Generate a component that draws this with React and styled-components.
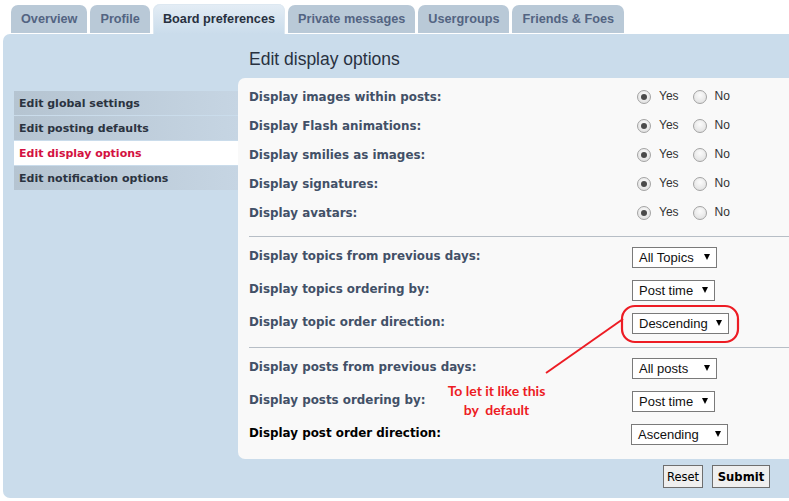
import React from 'react';
import styled, { createGlobalStyle } from 'styled-components';

const GlobalStyle = createGlobalStyle`
  html, body { margin: 0; padding: 0; background: #ffffff; }
  body { font-family: "DejaVu Sans", Verdana, sans-serif; overflow: hidden; }
  * { box-sizing: border-box; }
`;

const Page = styled.div`
  position: relative;
  width: 789px;
  height: 501px;
  padding-top: 4px;
`;

const Tabs = styled.ul`
  display: flex;
  align-items: flex-end;
  gap: 3px;
  height: 30px;
  margin: 0 0 0 11px;
  padding: 0;
  list-style: none;
`;

const Tab = styled.li`
  display: flex;
  align-items: center;
  height: ${p => (p.$active ? '30px' : '28px')};
  margin-bottom: ${p => (p.$active ? '0' : '1px')};
  padding: 0 10px;
  border-radius: 7px 7px 0 0;
  font-family: "Liberation Sans", Arial, sans-serif;
  font-weight: bold;
  font-size: 12.7px;
  color: ${p => (p.$active ? '#28313F' : '#536482')};
  background: ${p => (p.$active ? 'linear-gradient(#E4EDF5, #CADCEB)' : '#B9C9D7')};
  box-shadow: ${p => (p.$active ? 'inset 1px 1px 0 #DDE8F1, inset -1px 0 0 #DDE8F1' : 'none')};
`;

const Panel = styled.div`
  display: grid;
  grid-template-columns: 235px 1fr;
  height: 464px;
  margin-left: 3px;
  background: #CADCEB;
  border-radius: 7px 0 0 7px;
`;

const Sidebar = styled.ul`
  margin: 0;
  padding: 57px 0 0 11px;
  list-style: none;
`;

const MenuItem = styled.li`
  display: flex;
  align-items: center;
  height: 24px;
  margin-bottom: 1px;
  padding-left: 5px;
  font-weight: bold;
  font-size: 11px;
  color: ${p => (p.$active ? '#D31141' : '#2B3340')};
  background: ${p => (p.$active ? '#FFFFFF' : 'linear-gradient(to right, #B5C4D1, #C6D5E3)')};
`;

const Main = styled.div`
  display: flex;
  flex-direction: column;
`;

const Heading = styled.h2`
  margin: 15px 0 9px 11px;
  font-family: "Liberation Sans", Arial, sans-serif;
  font-weight: normal;
  font-size: 17.5px;
  line-height: 20px;
  color: #28313F;
`;

const Content = styled.div`
  height: 381px;
  padding-left: 11px;
  background: #F9F9F9;
  border-radius: 7px 0 0 7px;
`;

const Fieldset = styled.div`
  padding: ${p => p.$pad};
  border-top: ${p => (p.$line ? '1px solid #B7BEC6' : 'none')};
`;

const Row = styled.div`
  display: grid;
  grid-template-columns: 383px 1fr;
  align-items: center;
  height: ${p => p.$h}px;
`;

const Label = styled.span`
  font-weight: bold;
  font-size: 11.9px;
  color: ${p => (p.$dark ? '#000000' : '#425067')};
`;

const RadioGroup = styled.div`
  display: flex;
  align-items: center;
  font-family: "Liberation Sans", Arial, sans-serif;
  font-size: 12px;
  color: #333333;
`;

const Radio = styled.span`
  position: relative;
  width: 14px;
  height: 14px;
  margin: 1px 8px 0 ${p => (p.$first ? '5px' : '14px')};
  border: 1px solid #A3A3A3;
  border-radius: 50%;
  background: radial-gradient(circle at 50% 35%, #FBFBFB, #DCDCDC);
  &::after {
    content: '';
    display: ${p => (p.$checked ? 'block' : 'none')};
    position: absolute;
    left: 3px;
    top: 3px;
    width: 6px;
    height: 6px;
    border-radius: 50%;
    background: #4A4A4A;
  }
`;

const RadioText = styled.span`
  margin-top: -1px;
`;

const Select = styled.div`
  display: flex;
  align-items: center;
  justify-content: space-between;
  width: ${p => p.$w}px;
  height: 21px;
  margin-left: ${p => p.$shift || 0}px;
  margin-top: 3px;
  padding: 0 6px 0 6px;
  border: 1px solid #7A7A7A;
  background: #FFFFFF;
  font-family: "Liberation Sans", Arial, sans-serif;
  font-size: 13px;
  color: #111111;
`;

const Arrow = styled.span`
  width: 0;
  height: 0;
  border-left: 3.5px solid transparent;
  border-right: 3.5px solid transparent;
  border-top: 6px solid #000000;
`;

const Buttons = styled.div`
  display: flex;
  justify-content: flex-end;
  gap: 9px;
  padding: 6px 19px 0 0;
`;

const Button = styled.button`
  width: ${p => p.$w}px;
  height: 23px;
  padding: 0;
  border: 1px solid #6E6E6E;
  background: #EFEFEF;
  font-family: "DejaVu Sans", Verdana, sans-serif;
  font-size: ${p => (p.$primary ? '11.6px' : '11.5px')};
  font-weight: ${p => (p.$primary ? 'bold' : 'normal')};
  color: #000000;
`;

const Overlay = styled.svg`
  position: absolute;
  left: 0;
  top: 0;
  pointer-events: none;
`;

const Note = styled.div`
  position: absolute;
  left: 440px;
  top: 381px;
  width: 113px;
  text-align: center;
  font-family: Lato, "Open Sans", sans-serif;
  font-weight: bold;
  font-size: 14px;
  line-height: 19px;
  color: #ED1C24;
  white-space: pre;
`;

const tabs = ['Overview', 'Profile', 'Board preferences', 'Private messages', 'Usergroups', 'Friends & Foes'];
const menu = ['Edit global settings', 'Edit posting defaults', 'Edit display options', 'Edit notification options'];
const radios = [
  'Display images within posts:',
  'Display Flash animations:',
  'Display smilies as images:',
  'Display signatures:',
  'Display avatars:',
];
const topics = [
  ['Display topics from previous days:', 'All Topics', 85],
  ['Display topics ordering by:', 'Post time', 83],
  ['Display topic order direction:', 'Descending', 97],
];
const posts = [
  ['Display posts from previous days:', 'All posts', 85, 0, false],
  ['Display posts ordering by:', 'Post time', 83, 0, false],
  ['Display post order direction:', 'Ascending', 97, -1, true],
];

export default function App() {
  return (
    <Page>
      <GlobalStyle />
      <Tabs>
        {tabs.map(t => (
          <Tab key={t} $active={t === 'Board preferences'}>{t}</Tab>
        ))}
      </Tabs>
      <Panel>
        <Sidebar>
          {menu.map(m => (
            <MenuItem key={m} $active={m === 'Edit display options'}>{m}</MenuItem>
          ))}
        </Sidebar>
        <Main>
          <Heading>Edit display options</Heading>
          <Content>
            <Fieldset $pad="4px 0 9px">
              {radios.map(r => (
                <Row key={r} $h={29}>
                  <Label>{r}</Label>
                  <RadioGroup>
                    <Radio $first $checked />
                    <RadioText>Yes</RadioText>
                    <Radio />
                    <RadioText>No</RadioText>
                  </RadioGroup>
                </Row>
              ))}
            </Fieldset>
            <Fieldset $line $pad="2px 0 9px">
              {topics.map(([l, v, w]) => (
                <Row key={l} $h={33}>
                  <Label>{l}</Label>
                  <Select $w={w}>{v}<Arrow /></Select>
                </Row>
              ))}
            </Fieldset>
            <Fieldset $line $pad="2px 0 10px">
              {posts.map(([l, v, w, s, d]) => (
                <Row key={l} $h={33}>
                  <Label $dark={d}>{l}</Label>
                  <Select $w={w} $shift={s}>{v}<Arrow /></Select>
                </Row>
              ))}
            </Fieldset>
          </Content>
          <Buttons>
            <Button $w={40}>Reset</Button>
            <Button $w={58} $primary>Submit</Button>
          </Buttons>
        </Main>
      </Panel>
      <Overlay width="789" height="501" viewBox="0 0 789 501">
        <rect x="622" y="306" width="116" height="36" rx="13" ry="13" fill="none" stroke="#ED1C24" strokeWidth="2.2" />
        <line x1="546" y1="373" x2="623" y2="319" stroke="#ED1C24" strokeWidth="2" />
      </Overlay>
      <Note>{'To let it like this\nby  default'}</Note>
    </Page>
  );
}
